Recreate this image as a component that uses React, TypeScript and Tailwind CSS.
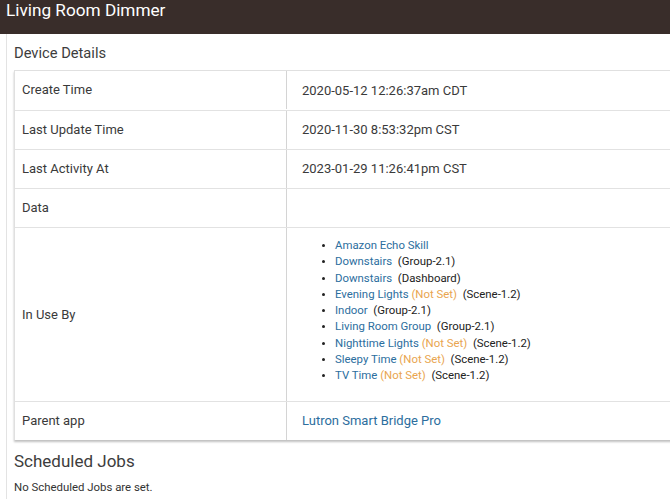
import React from 'react';

type Usage = { name: string; notSet?: boolean; kind?: string };

const USED_BY: Usage[] = [
  { name: 'Amazon Echo Skill' },
  { name: 'Downstairs', kind: 'Group-2.1' },
  { name: 'Downstairs', kind: 'Dashboard' },
  { name: 'Evening Lights', notSet: true, kind: 'Scene-1.2' },
  { name: 'Indoor', kind: 'Group-2.1' },
  { name: 'Living Room Group', kind: 'Group-2.1' },
  { name: 'Nighttime Lights', notSet: true, kind: 'Scene-1.2' },
  { name: 'Sleepy Time', notSet: true, kind: 'Scene-1.2' },
  { name: 'TV Time', notSet: true, kind: 'Scene-1.2' },
];

function Row({ label, children, tall }: { label: string; children?: React.ReactNode; tall?: boolean }) {
  return (
    <div className="flex border-t border-[#e2e2e2] first:border-t-0 first:h-[39px]">
      <div className={`w-[272px] shrink-0 border-r border-[#d4d4d4] px-[7px] flex items-center ${tall ? 'h-[173px]' : 'h-[38px]'}`}>
        {label}
      </div>
      <div className={`flex-1 px-[15px] flex ${tall ? 'items-start pt-[9px]' : 'items-center'}`}>{children}</div>
    </div>
  );
}

export default function App() {
  return (
    <div className="w-[670px] h-[499px] overflow-hidden bg-white text-[#333] font-['Roboto','Liberation_Sans',sans-serif]">
      {/* title bar */}
      <div className="h-[34px] bg-[#392d2a] text-white text-[17.2px] leading-[21px] pl-[6px]">
        Living Room Dimmer
      </div>

      <div className="ml-[6px] border-l border-[#e3e3e3] h-[465px] pl-[7px]">
        <div className="text-[14.7px] text-[#3d3d3d] pt-[8px] h-[36px]">Device Details</div>

        <div className="w-[700px] border-l border-t border-[#e0e0e0] shadow-[0_2px_2px_rgba(0,0,0,0.25)] text-[13px] text-[#3a3a3a]">
          <Row label="Create Time">2020-05-12 12:26:37am CDT</Row>
          <Row label="Last Update Time">2020-11-30 8:53:32pm CST</Row>
          <Row label="Last Activity At">2023-01-29 11:26:41pm CST</Row>
          <Row label="Data" />
          <Row label="In Use By" tall>
            <ul className="list-disc pl-[33px] text-[11.4px] leading-[16.25px] text-[#222] marker:text-[10px]">
              {USED_BY.map((u, i) => (
                <li key={i}>
                  <span className="text-[#2c6e9e]">{u.name}</span>
                  {u.notSet && <span className="text-[#e9a54f]"> (Not Set)</span>}
                  {u.kind && <span>&nbsp; ({u.kind})</span>}
                </li>
              ))}
            </ul>
          </Row>
          <Row label="Parent app">
            <span className="text-[#2c6e9e]">Lutron Smart Bridge Pro</span>
          </Row>
        </div>

        <div className="text-[17px] text-[#3d3d3d] mt-[9px] h-[30px]">Scheduled Jobs</div>
        <div className="text-[11.4px] text-[#333]">No Scheduled Jobs are set.</div>
      </div>
    </div>
  );
}
